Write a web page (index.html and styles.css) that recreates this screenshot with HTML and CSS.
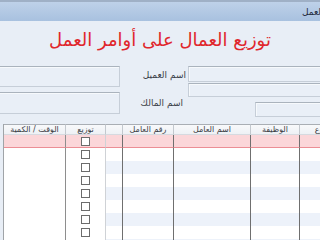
FILE: index.html
```html
<!DOCTYPE html>
<html lang="ar">
<head>
<meta charset="utf-8">
<link rel="stylesheet" href="styles.css">
</head>
<body>
<div class="window">
  <div class="titlebar"><span class="title" dir="rtl">توزيع العمال على أوامر العمل</span></div>
  <h1 class="heading" dir="rtl">توزيع العمال على أوامر العمل</h1>
  <div class="form">
    <div class="col-left">
      <div class="box box-a"></div>
      <div class="box box-b"></div>
    </div>
    <div class="col-labels">
      <div class="label l1" dir="rtl">اسم العميل</div>
      <div class="label l2" dir="rtl">اسم المالك</div>
    </div>
    <div class="col-right">
      <div class="box box-c"></div>
      <div class="box box-d"></div>
      <div class="box box-e"></div>
    </div>
  </div>
  <table class="grid">
    <colgroup>
      <col class="c-time"><col class="c-chk"><col class="c-empty"><col class="c-num"><col class="c-name"><col class="c-job"><col class="c-proj">
    </colgroup>
    <thead>
      <tr><th>الوقت / الكمية</th><th>توزيع</th><th class="light"></th><th>رقم العامل</th><th>اسم العامل</th><th>الوظيفة</th><th>المشروع</th></tr>
    </thead>
    <tbody>
      <tr class="sel"><td class="t"></td><td class="k"><input type="checkbox" class="chk"></td><td class="e"></td><td></td><td></td><td></td><td></td></tr>
      <tr><td class="t"></td><td class="k"><input type="checkbox" class="chk"></td><td class="e"></td><td></td><td></td><td></td><td></td></tr>
      <tr class="band"><td class="t"></td><td class="k"><input type="checkbox" class="chk"></td><td class="e"></td><td></td><td></td><td></td><td></td></tr>
      <tr><td class="t"></td><td class="k"><input type="checkbox" class="chk"></td><td class="e"></td><td></td><td></td><td></td><td></td></tr>
      <tr class="band"><td class="t"></td><td class="k"><input type="checkbox" class="chk"></td><td class="e"></td><td></td><td></td><td></td><td></td></tr>
      <tr><td class="t"></td><td class="k"><input type="checkbox" class="chk"></td><td class="e"></td><td></td><td></td><td></td><td></td></tr>
      <tr class="band"><td class="t"></td><td class="k"><input type="checkbox" class="chk"></td><td class="e"></td><td></td><td></td><td></td><td></td></tr>
      <tr><td class="t"></td><td class="k"><input type="checkbox" class="chk"></td><td class="e"></td><td></td><td></td><td></td><td></td></tr>
      <tr class="band"><td class="t"></td><td class="k"><input type="checkbox" class="chk"></td><td class="e"></td><td></td><td></td><td></td><td></td></tr>
    </tbody>
  </table>
</div>
</body>
</html>
```
FILE: styles.css
```css
* { box-sizing: border-box; }
html, body { margin: 0; padding: 0; }
body {
  width: 320px;
  height: 240px;
  overflow: hidden;
  background: #e8eef6;
  font-family: "DejaVu Sans", sans-serif;
}
.window {
  width: 320px;
  height: 240px;
  overflow: hidden;
  background: #e8eef6;
}
.titlebar {
  height: 21px;
  border-top: 2px solid #9fb0c6;
  background: linear-gradient(#bed1e9, #a8c1df);
  display: flex;
  align-items: center;
  padding-left: 302px;
  overflow: hidden;
  white-space: nowrap;
}
.title {
  flex-shrink: 0;
  font-size: 9px;
  color: #1f2b3b;
}
.heading {
  margin: 0;
  height: 45px;
  padding-top: 8px;
  font-size: 18px;
  line-height: 22px;
  font-weight: normal;
  color: #e0262c;
  text-align: center;
  white-space: nowrap;
}
.form {
  display: flex;
  height: 58px;
}
.box {
  background: #e9eff7;
  border: 1px solid #c6ced8;
  border-top-color: #aab3bd;
  box-shadow: inset 1px 1px 0 #f6f9fc;
}
.col-left {
  flex: 0 0 120px;
  display: flex;
  flex-direction: column;
  gap: 5px;
}
.box-a { height: 21px; margin-left: -2px; }
.box-b { height: 22px; margin-left: -2px; }
.col-labels {
  flex: 0 0 68px;
  display: flex;
  flex-direction: column;
  align-items: flex-end;
  font-size: 9px;
  color: #3a4048;
}
.label { line-height: 11px; }
.l1 { margin-top: 4px; padding-right: 2px; }
.l2 { margin-top: 17px; padding-right: 5px; }
.col-right {
  flex: 0 0 140px;
  display: flex;
  flex-direction: column;
}
.box-c { height: 16px; }
.box-d { height: 14px; margin-top: 1px; }
.box-e { height: 15px; margin-top: 5px; margin-left: 67px; }

.grid {
  margin-left: 3px;
  width: 356px;
  table-layout: fixed;
  border-collapse: separate;
  border-spacing: 0;
  border-left: 1px solid #a0a4a8;
}
.c-time { width: 62px; }
.c-chk { width: 40px; }
.c-empty { width: 17px; }
.c-num { width: 51px; }
.c-name { width: 77px; }
.c-job { width: 49px; }
.c-proj { width: 60px; }
.grid th {
  height: 11px;
  padding: 0;
  font-size: 8px;
  line-height: 9px;
  font-weight: normal;
  color: #3c4046;
  text-align: center;
  white-space: nowrap;
  overflow: hidden;
  background: linear-gradient(#f8f9fb, #eef1f5);
  border-top: 1px solid #a9aeb4;
  border-bottom: 1px solid #d6dae0;
  border-right: 1px solid #c3c8ce;
}
.grid td {
  height: 13px;
  padding: 0;
  background: #ffffff;
  border-right: 1px solid #6f6f6f;
}
.grid td.t { border-right-color: #8e8e8e; }
.grid td.e { border-right-color: #6f6f6f; }
.grid td.k {
  border-right-color: #cfd2d6;
  text-align: center;
  vertical-align: middle;
  line-height: 0;
}
.grid tr.band td { background: #edf2fa; }
.grid tr.band td.t,
.grid tr.band td.k { background: #ffffff; }
.grid tr.sel td {
  background: #fbd6d9;
  border-bottom: 1px solid #eb8e95;
}
.chk {
  appearance: none;
  -webkit-appearance: none;
  width: 9px;
  height: 9px;
  margin: 0;
  border: 1px solid #6c6c6c;
  background: #ffffff;
  vertical-align: middle;
}
```
